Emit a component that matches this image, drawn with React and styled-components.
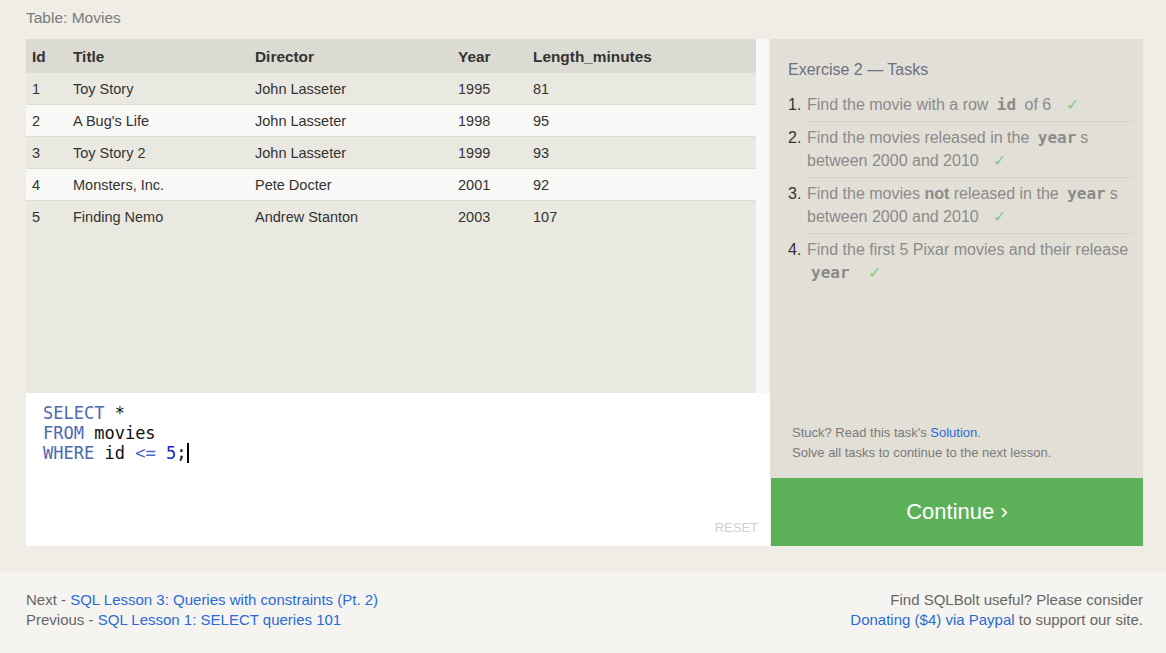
import styled, { createGlobalStyle } from "styled-components";

const Global = createGlobalStyle`
    html, body {
        margin: 0;
        padding: 0;
        background: #f5f4f0;
        font-family: "Liberation Sans", Arial, sans-serif;
    }
    * { box-sizing: border-box; }
`;

const Main = styled.div`
    background: #efede6;
    padding: 0 23px 26px 26px;
`;

const Caption = styled.div`
    height: 39px;
    padding-top: 8px;
    font-size: 15.5px;
    line-height: 20px;
    color: #7b7b7b;
`;

const Workspace = styled.div`
    display: flex;
    height: 507px;
`;

const LeftCol = styled.div`
    width: 744px;
    display: flex;
    flex-direction: column;
`;

const TableArea = styled.div`
    height: 354px;
    display: flex;
`;

const TableScroll = styled.div`
    flex: 1;
    background: #e9e8e1;
`;

const Scrollbar = styled.div`
    width: 14px;
    background: #f8f8f8;
    border-right: 1px solid #ecebe6;
`;

const Table = styled.table`
    width: 100%;
    border-collapse: collapse;
    font-size: 14.5px;
    color: #333;
`;

const Th = styled.th`
    text-align: left;
    font-weight: bold;
    font-size: 15.4px;
    height: 33px;
    padding: 3px 0 0 ${(p) => p.$pad || 0}px;
    background: #dcdbd3;
    width: ${(p) => p.$w}px;
`;

const Tr = styled.tr`
    background: ${(p) => (p.$even ? "#f8f8f6" : "#e9e8e1")};
    border-top: 1px solid #deddd5;
`;

const Td = styled.td`
    height: 32px;
    padding: 1px 0 0 ${(p) => p.$pad || 0}px;
`;

const Editor = styled.div`
    flex: 1;
    background: #fff;
    position: relative;
    padding: 10px 17px;
    font-family: "DejaVu Sans Mono", monospace;
    font-size: 17px;
    line-height: 20px;
    color: #111;
`;

const Kw = styled.span`
    color: #4b69b1;
`;

const Op = styled.span`
    color: #4866d6;
`;

const Num = styled.span`
    color: #1e22c8;
`;

const Cursor = styled.span`
    display: inline-block;
    width: 2px;
    height: 20px;
    background: #000;
    vertical-align: -4px;
    margin-left: 1px;
`;

const Reset = styled.div`
    position: absolute;
    right: 12px;
    bottom: 11px;
    font-family: "Liberation Sans Narrow", "Liberation Sans", Arial, sans-serif;
    font-size: 13px;
    line-height: 14px;
    color: #cfcfcf;
`;

const RightCol = styled.div`
    width: 373px;
    display: flex;
    flex-direction: column;
`;

const Tasks = styled.div`
    flex: 1;
    background: #e2dfd7;
    padding: 21px 8px 15px 18px;
    display: flex;
    flex-direction: column;
`;

const TasksTitle = styled.div`
    font-size: 16px;
    line-height: 20px;
    color: #6b7184;
    margin-bottom: 13px;
`;

const List = styled.div`
    display: flex;
    flex-direction: column;
`;

const Item = styled.div`
    display: flex;
    font-size: 16px;
    line-height: 23px;
    & + & {
        margin-top: 4px;
    }
`;

const ItemNum = styled.span`
    width: 19px;
    flex-shrink: 0;
    color: #333;
`;

const ItemText = styled.span`
    flex: 1;
    color: #8b8b8b;
    padding-bottom: 5px;
    border-bottom: ${(p) => (p.$last ? "none" : "1px solid #d6d3ca")};
`;

const Code = styled.code`
    font-family: "DejaVu Sans Mono", monospace;
    font-weight: bold;
    color: #8b8b8b;
    padding: 0 4px;
`;

const Strong = styled.b`
    font-weight: bold;
`;

const Check = styled.span`
    color: #86c983;
    margin-left: 10px;
`;

const Help = styled.div`
    margin-top: auto;
    padding-left: 4px;
    font-size: 13px;
    line-height: 20px;
    color: #7a7a7a;
`;

const Link = styled.a`
    color: #2b6bd6;
    text-decoration: none;
`;

const Continue = styled.div`
    height: 68px;
    background: #5cb158;
    color: #fff;
    font-size: 22px;
    display: flex;
    align-items: center;
    justify-content: center;
    margin-left: 1px;
`;

const Footer = styled.div`
    display: flex;
    justify-content: space-between;
    padding: 18px 23px 0 26px;
    font-size: 15px;
    line-height: 20px;
    color: #666;
    height: 81px;
`;

const FootRight = styled.div`
    text-align: right;
`;

const movies = [
    [1, "Toy Story", "John Lasseter", 1995, 81],
    [2, "A Bug's Life", "John Lasseter", 1998, 95],
    [3, "Toy Story 2", "John Lasseter", 1999, 93],
    [4, "Monsters, Inc.", "Pete Docter", 2001, 92],
    [5, "Finding Nemo", "Andrew Stanton", 2003, 107],
];

const cols = [
    { name: "Id", w: 47, pad: 6 },
    { name: "Title", w: 182 },
    { name: "Director", w: 203 },
    { name: "Year", w: 75 },
    { name: "Length_minutes" },
];

const App = () => {
    return (
        <>
            <Global />
            <Main>
                <Caption>Table: Movies</Caption>
                <Workspace>
                    <LeftCol>
                        <TableArea>
                            <TableScroll>
                                <Table>
                                    <thead>
                                        <tr>
                                            {cols.map((c) => (
                                                <Th key={c.name} $w={c.w} $pad={c.pad}>{c.name}</Th>
                                            ))}
                                        </tr>
                                    </thead>
                                    <tbody>
                                        {movies.map((m, i) => (
                                            <Tr key={m[0]} $even={i % 2 === 1}>
                                                {m.map((v, j) => (
                                                    <Td key={j} $pad={cols[j].pad}>{v}</Td>
                                                ))}
                                            </Tr>
                                        ))}
                                    </tbody>
                                </Table>
                            </TableScroll>
                            <Scrollbar />
                        </TableArea>
                        <Editor>
                            <div><Kw>SELECT</Kw> *</div>
                            <div><Kw>FROM</Kw> movies</div>
                            <div><Kw>WHERE</Kw> id <Op>&lt;=</Op> <Num>5</Num>;<Cursor /></div>
                            <Reset>RESET</Reset>
                        </Editor>
                    </LeftCol>
                    <RightCol>
                        <Tasks>
                            <TasksTitle>Exercise 2 — Tasks</TasksTitle>
                            <List>
                                <Item>
                                    <ItemNum>1.</ItemNum>
                                    <ItemText>Find the movie with a row <Code>id</Code> of 6 <Check>✓</Check></ItemText>
                                </Item>
                                <Item>
                                    <ItemNum>2.</ItemNum>
                                    <ItemText>Find the movies released in the <Code>year</Code>s between 2000 and 2010 <Check>✓</Check></ItemText>
                                </Item>
                                <Item>
                                    <ItemNum>3.</ItemNum>
                                    <ItemText>Find the movies <Strong>not</Strong> released in the <Code>year</Code>s between 2000 and 2010 <Check>✓</Check></ItemText>
                                </Item>
                                <Item>
                                    <ItemNum>4.</ItemNum>
                                    <ItemText $last>Find the first 5 Pixar movies and their release <Code>year</Code> <Check>✓</Check></ItemText>
                                </Item>
                            </List>
                            <Help>
                                <div>Stuck? Read this task's <Link href="#">Solution</Link>.</div>
                                <div>Solve all tasks to continue to the next lesson.</div>
                            </Help>
                        </Tasks>
                        <Continue>Continue ›</Continue>
                    </RightCol>
                </Workspace>
            </Main>
            <Footer>
                <div>
                    <div>Next - <Link href="#">SQL Lesson 3: Queries with constraints (Pt. 2)</Link></div>
                    <div>Previous - <Link href="#">SQL Lesson 1: SELECT queries 101</Link></div>
                </div>
                <FootRight>
                    <div>Find SQLBolt useful? Please consider</div>
                    <div><Link href="#">Donating ($4) via Paypal</Link> to support our site.</div>
                </FootRight>
            </Footer>
        </>
    );
};

export default App;
